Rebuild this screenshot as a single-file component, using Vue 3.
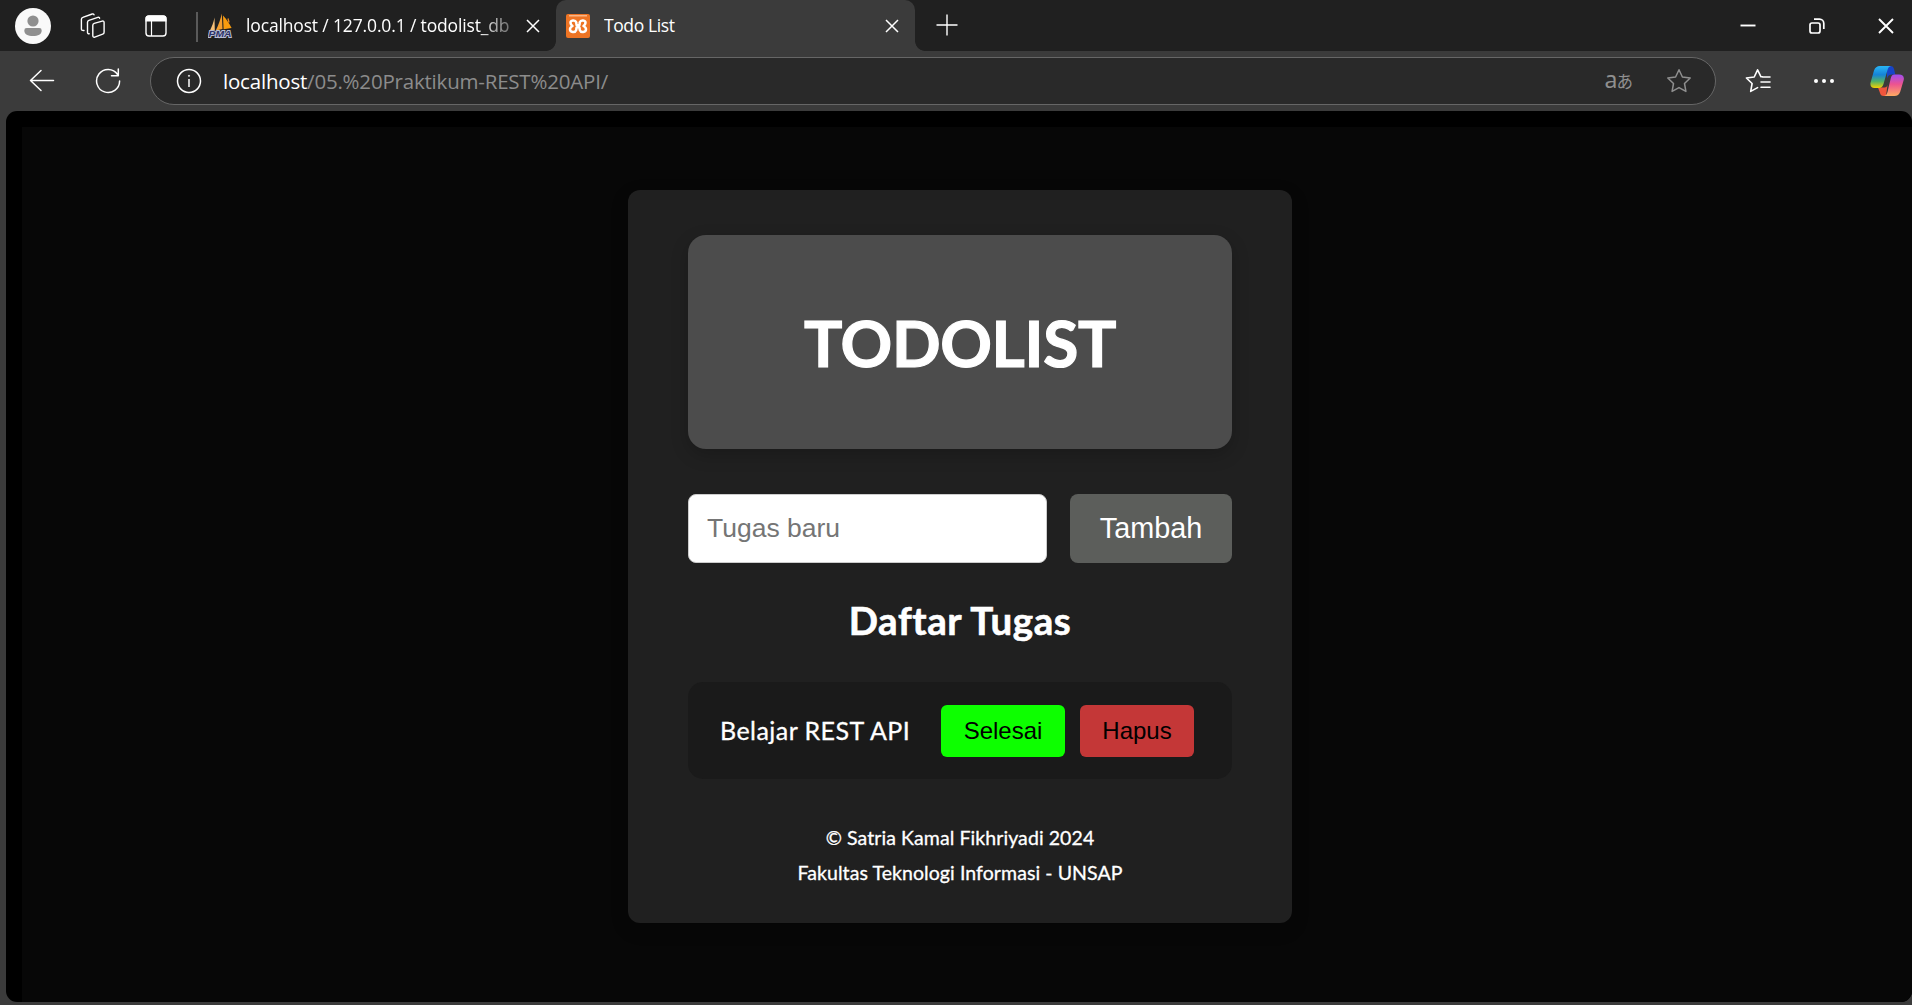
<script setup>
import { ref } from 'vue'

const newTask = ref('')
const tasks = ref([{ id: 1, name: 'Belajar REST API' }])

function addTask() {
  const name = newTask.value.trim()
  if (!name) return
  tasks.value.push({ id: Date.now(), name })
  newTask.value = ''
}
function removeTask(id) {
  tasks.value = tasks.value.filter((t) => t.id !== id)
}
</script>

<template>
  <div class="window">
    <header class="titlebar">
      <svg class="avatar" width="36" height="36" viewBox="0 0 36 36">
        <circle cx="18" cy="18" r="18" fill="#f9f9f9" />
        <circle cx="18" cy="13" r="5.6" fill="#8f8f8f" />
        <path d="M11.700 20h12.600a2.400 2.400 0 0 1 2.400 2.400c0 3.600-3.600 5.700-8.700 5.700s-8.700-2.100-8.700-5.700a2.400 2.400 0 0 1 2.400-2.400z" fill="#8f8f8f" />
      </svg>
      <svg class="workspaces" width="26" height="26" viewBox="0 0 26 26" fill="none" stroke="#fff" stroke-width="1.4" stroke-linejoin="round" stroke-linecap="round">
        <path d="M12.800 12.200c0-1 .5-1.600 1.400-1.900l8-2.200c1.200-.3 1.900.3 1.900 1.400v9.700c0 1-.5 1.700-1.400 2l-7.900 2.900c-1.200.4-2-.2-2-1.400z" />
        <path d="M9.200 20.800c-1.100.1-1.700-.5-1.700-1.500V9.200c0-1 .5-1.600 1.400-1.900L17.800 4.400c.9-.3 1.600 0 1.800.8" />
        <path d="M4 17.500c-1.600.2-2.600-.4-2.600-1.600V6.300c0-1 .5-1.600 1.400-1.900L12.200 1c.9-.3 1.500 0 1.800.8" />
      </svg>
      <svg class="vtabs" width="22" height="22" viewBox="0 0 22 22">
        <rect x="1" y="1" width="20" height="20" rx="3" fill="none" stroke="#fff" stroke-width="1.4" />
        <path d="M.5 6.500v-3a3 3 0 0 1 3-3h15a3 3 0 0 1 3 3v3z" fill="#fff" />
        <path d="M6.500 6v15" stroke="#fff" stroke-width="1.200" />
      </svg>
      <i class="divider"></i>
      <div class="tab first">
        <svg width="26" height="26" viewBox="0 0 26 26">
          <path d="M6.500 4.500 6.800 17 1.500 18.500C3.800 14 5.500 9.500 6.500 4.500z" fill="#f6c078" />
          <path d="M13.800.5 14.500 16 7.800 17.500C10.500 12 12.600 6 13.800.5z" fill="#f5a030" />
          <path d="M15 2.500c3.300 3.500 6.500 8 8.600 12.500l-8 1.200z" fill="#f89c0e" />
          <path d="M20 5.500l1 4" stroke="#e98c22" stroke-width="1.300" />
          <text x="0.500" y="24" textLength="23" lengthAdjust="spacingAndGlyphs" font-family="Liberation Sans, sans-serif" font-size="9.500" font-weight="700" font-style="italic" fill="#2c3268" stroke="#b9bcd4" stroke-width="1.800" paint-order="stroke">PMA</text>
        </svg>
        <span class="tab-title faded">localhost / 127.0.0.1 / todolist_db</span>
        <svg class="x" width="14" height="14" viewBox="0 0 14 14"><path d="M1 1l12 12M13 1 1 13" stroke="#fff" stroke-width="1.500" /></svg>
      </div>
      <div class="tab active">
        <svg width="24" height="24" viewBox="0 0 24 24">
          <rect width="24" height="24" rx="2" fill="#ee7424" />
          <path d="M3 1.800h18" stroke="#fbc6a0" stroke-width="1.200" />
          <path d="M4.500 8.800C4.300 6.100 9.200 5.500 10.200 8.200c.4 1.200-.2 2.900.6 3h2.400c.8-.1.200-1.800.6-3 1-2.700 5.900-2.100 5.700.6-.1 1.600-1 2.500-2 3.200 1.400.7 2.500 1.700 2.500 3.300 0 3.300-5.200 3.700-6.200.9-.4-1.200.2-2.900-.6-3h-2.400c-.8.1-.2 1.800-.6 3-1 2.800-6.200 2.400-6.200-.9 0-1.600 1.100-2.600 2.500-3.300-1-.7-1.900-1.600-2-3.200z" fill="none" stroke="#fff" stroke-width="2.500" stroke-linejoin="round" />
        </svg>
        <span class="tab-title">Todo List</span>
        <svg class="x" width="14" height="14" viewBox="0 0 14 14"><path d="M1 1l12 12M13 1 1 13" stroke="#fff" stroke-width="1.500" /></svg>
      </div>
      <svg class="plus" width="22" height="22" viewBox="0 0 22 22"><path d="M11 .5v21M.5 11h21" stroke="#fff" stroke-width="1.400" /></svg>
      <div class="controls">
        <svg width="16" height="16" viewBox="0 0 16 16"><path d="M.5 7.500h15" stroke="#fff" stroke-width="1.900" /></svg>
        <svg width="16" height="16" viewBox="0 0 16 16" fill="none" stroke="#fff" stroke-width="1.700"><rect x="1" y="5" width="10" height="10" rx="2" /><path d="M5 1.200h5.500a4.300 4.300 0 0 1 4.300 4.300V11" /></svg>
        <svg width="16" height="16" viewBox="0 0 16 16"><path d="M1 1l14 14M15 1 1 15" stroke="#fff" stroke-width="1.900" /></svg>
      </div>
    </header>

    <nav class="toolbar">
      <svg class="back" width="26" height="24" viewBox="0 0 26 24" fill="none" stroke="#fff" stroke-width="1.500" stroke-linecap="round" stroke-linejoin="round"><path d="M24.500 11.500h-23M12 1.500l-10.500 10L12 21.500" /></svg>
      <svg class="reload" width="26" height="26" viewBox="0 0 26 26" fill="none" stroke="#fff" stroke-width="1.500" stroke-linecap="round" stroke-linejoin="round"><path d="M24.600 13A11.500 11.500 0 1 1 22.600 6.500M23.300 1v6.800h-6.800" /></svg>
      <div class="address">
        <svg width="26" height="26" viewBox="0 0 26 26" fill="none" stroke="#fff" stroke-width="1.500"><circle cx="13" cy="13" r="11.500" /><path d="M13 11v8" /><circle cx="13" cy="7.800" r=".6" fill="#fff" stroke-width=".8" /></svg>
        <span class="url"><b>localhost</b><span>/05.%20Praktikum-REST%20API/</span></span>
        <span class="translate">a<small>あ</small></span>
        <svg class="star" width="26" height="26" viewBox="0 0 26 26" fill="none" stroke="#8f8f8f" stroke-width="1.500" stroke-linejoin="round"><path d="M13 1.800 16.400 9l7.800 1-5.700 5.500 1.400 7.900L13 19.600l-6.900 3.800 1.400-7.900L1.800 10l7.800-1z" /></svg>
      </div>
      <svg class="favs" width="26" height="26" viewBox="0 0 26 26" fill="none" stroke="#fff" stroke-width="1.600" stroke-linejoin="round" stroke-linecap="round"><path d="M17.500 8.800H16L12.600 1.800 9.200 9l-7.800 1 5.700 5.500-1.400 7.900 6.900-3.800M17.500 9H25M16 14h9M16 19.300h9" /></svg>
      <svg class="dots" width="22" height="6" viewBox="0 0 22 6" fill="#fff"><circle cx="3" cy="3" r="2" /><circle cx="11" cy="3" r="2" /><circle cx="19" cy="3" r="2" /></svg>
      <svg class="copilot" width="34" height="32" viewBox="0 0 34 32">
        <defs>
          <linearGradient id="cpA" x1="0" y1="0" x2="0" y2="1"><stop offset="0" stop-color="#29b6f6" /><stop offset=".4" stop-color="#1583d8" /><stop offset=".7" stop-color="#52b167" /><stop offset="1" stop-color="#f5d000" /></linearGradient>
          <linearGradient id="cpB" x1="0" y1="0" x2="0" y2="1"><stop offset="0" stop-color="#a04df0" /><stop offset=".45" stop-color="#ed5390" /><stop offset="1" stop-color="#ffab62" /></linearGradient>
        </defs>
        <path d="M17 1h3.500c2 0 3 1 3.500 3l1.300 5.500h-3c-3 0-4.500 1.500-5.300 4z" fill="#1744c8" />
        <path d="M8 22.500h6.500c1.500 0 2.500-.8 3-2.500L16 31h-2.500c-2 0-3-1-3.500-3z" fill="#f0553c" />
        <path d="M10 1h11c-2 .3-2.800 1.800-3.500 4l-4 14c-.8 2.700-2.200 4-4.500 4H4.500C1.500 23-.2 20.800.6 17.500L4 5.500C5 2.500 7 1 10 1z" fill="url(#cpA)" />
        <path d="M24.500 9.500h4.500c3.500 0 5.500 2 4.700 5.500L30.300 26.500c-1 3-3 4.500-6 4.500H14c2-.3 2.800-1.800 3.500-4l3.200-13.500c.7-2.700 1.500-4 3.800-4z" fill="url(#cpB)" />
      </svg>
    </nav>

    <div class="viewport">
      <div class="page">
        <main class="card">
          <div class="banner"><h1>TODOLIST</h1></div>
          <form class="entry" @submit.prevent="addTask">
            <input v-model="newTask" type="text" placeholder="Tugas baru" />
            <button type="submit">Tambah</button>
          </form>
          <h2>Daftar Tugas</h2>
          <ul>
            <li v-for="task in tasks" :key="task.id">
              <span class="name">{{ task.name }}</span>
              <button class="done">Selesai</button>
              <button class="delete" @click="removeTask(task.id)">Hapus</button>
            </li>
          </ul>
          <footer>
            <p>© Satria Kamal Fikhriyadi 2024</p>
            <p>Fakultas Teknologi Informasi - UNSAP</p>
          </footer>
        </main>
      </div>
    </div>
  </div>
</template>

<style>
html,
body {
  margin: 0;
  overflow: hidden;
  background: #3b3b3b;
}
</style>

<style scoped>
* {
  box-sizing: border-box;
}
svg {
  display: block;
  flex: none;
}
.window {
  width: 1912px;
  height: 1005px;
  display: flex;
  flex-direction: column;
  background: #3b3b3b;
  color: #fff;
  font-family: "Open Sans", "Noto Sans", sans-serif;
}
.titlebar {
  height: 51px;
  flex: none;
  display: flex;
  align-items: center;
  padding-left: 15px;
  background: #202020;
}
.workspaces {
  margin-left: 29px;
}
.vtabs {
  margin-left: 39px;
}
.divider {
  width: 2px;
  height: 30px;
  margin: 2px 0 0 29px;
  background: #5a5a5a;
}
.tab {
  height: 51px;
  display: flex;
  align-items: center;
  font-size: 17.500px;
}
.tab.first {
  width: 358px;
  padding-left: 10px;
}
.tab.first > svg:first-child {
  margin-top: 1px;
}
.tab-title {
  flex: 1;
  white-space: nowrap;
  overflow: hidden;
  line-height: 26px;
  padding-bottom: 1px;
  letter-spacing: -0.4px;
}
.tab.first .tab-title {
  margin-left: 12px;
  letter-spacing: -0.150px;
}
.faded {
  mask-image: linear-gradient(90deg, #000 232px, rgba(0, 0, 0, 0.3) 266px);
}
.x {
  margin-top: 1px;
}
.tab.first .x {
  margin-right: 16px;
}
.tab.active {
  position: relative;
  width: 359px;
  padding: 0 16px 0 10px;
  border-radius: 10px 10px 0 0;
  background: #3b3b3b;
}
.tab.active::before,
.tab.active::after {
  content: "";
  position: absolute;
  bottom: 0;
  width: 10px;
  height: 10px;
}
.tab.active::before {
  left: -10px;
  background: radial-gradient(circle at 0 0, transparent 9.500px, #3b3b3b 10.200px);
}
.tab.active::after {
  right: -10px;
  background: radial-gradient(circle at 100% 0, transparent 9.500px, #3b3b3b 10.200px);
}
.tab.active .tab-title {
  margin-left: 14px;
}
.plus {
  margin-left: 21px;
  margin-top: -2px;
}
.controls {
  margin-left: auto;
  display: flex;
  gap: 53px;
  padding-right: 18.500px;
}
.toolbar {
  height: 60px;
  flex: none;
  display: flex;
  align-items: center;
  padding-left: 29px;
}
.reload {
  margin-left: 40px;
}
.address {
  width: 1566px;
  height: 48px;
  margin: 0 0 1px 29px;
  display: flex;
  align-items: center;
  padding: 0 23px 0 25px;
  border: 1.500px solid #666;
  border-radius: 24px;
  background: #292929;
}
.url {
  flex: 1;
  margin-left: 21px;
  font-size: 20.500px;
  line-height: 28px;
  white-space: nowrap;
  color: #8c8c8c;
  letter-spacing: -0.200px;
}
.url b {
  font-weight: 400;
  color: #fff;
}
.translate {
  display: flex;
  align-items: baseline;
  font: 23px/24px "Noto Sans", "Noto Sans CJK JP", sans-serif;
  color: #8f8f8f;
  margin: 0 33px 1px 0;
  white-space: nowrap;
}
.translate small {
  margin-left: -1px;
  font-size: 16.500px;
  line-height: 24px;
}
.favs {
  margin-left: 29px;
}
.dots {
  margin-left: 42px;
}
.copilot {
  margin-left: 35px;
}
.viewport {
  width: 1906px;
  height: 891px;
  margin-left: 6px;
  padding: 16px 0 0 16px;
  border-radius: 11px;
  background: #000;
  overflow: hidden;
}
.page {
  height: 875px;
  padding: 63px 0 0 606px;
  background: #070707;
}
.card {
  width: 664px;
  height: 733px;
  padding: 45px 60px 0;
  border-radius: 12px;
  background: #202020;
  box-shadow: 0 6px 18px rgba(0, 0, 0, 0.2);
  font-family: Lato, sans-serif;
}
.banner {
  height: 214px;
  display: flex;
  align-items: center;
  justify-content: center;
  border-radius: 18px;
  background: #4c4c4c;
  box-shadow: 0 6px 18px rgba(0, 0, 0, 0.2);
}
h1 {
  margin: 2px 0 0;
  font-size: 64px;
  line-height: 78px;
  font-weight: 700;
  letter-spacing: -0.350px;
  -webkit-text-stroke: 1.200px #fff;
}
.entry {
  display: flex;
  gap: 23px;
  margin-top: 45px;
}
.entry input {
  width: 359px;
  height: 69px;
  padding: 0 18px;
  border: 1px solid #ccc;
  border-radius: 8px;
  background: #fff;
  font: 26.500px "Liberation Sans", Arial, sans-serif;
  outline: none;
}
.entry input::placeholder {
  color: #757575;
}
.entry button {
  width: 162px;
  height: 69px;
  padding: 0 0 1px;
  border: 0;
  border-radius: 8px;
  background: #5c5e5b;
  color: #fff;
  font: 28.800px "Liberation Sans", Arial, sans-serif;
}
h2 {
  margin: 33px 0 0;
  text-align: center;
  font-size: 38.500px;
  line-height: 48px;
  font-weight: 700;
  letter-spacing: 0.600px;
  -webkit-text-stroke: 0.600px #fff;
}
ul {
  margin: 38px 0 0;
  padding: 0;
  list-style: none;
}
li {
  height: 97px;
  display: flex;
  align-items: center;
  padding: 0 38px 0 32px;
  border-radius: 15px;
  background: #1a1a1a;
}
.name {
  flex: 1;
  font-size: 25px;
  white-space: nowrap;
  padding-bottom: 2px;
  letter-spacing: 0.450px;
  -webkit-text-stroke: 0.300px #fff;
}
li button {
  height: 52px;
  padding: 0;
  border: 0;
  border-radius: 6px;
  color: #000;
  font: 24px "Liberation Sans", Arial, sans-serif;
}
.done {
  width: 124px;
  background: #0dff00;
}
.delete {
  width: 114px;
  margin-left: 15px;
  background: #c43737;
}
footer {
  margin-top: 41px;
  text-align: center;
  font-size: 19.500px;
  line-height: 35px;
  letter-spacing: 0.080px;
  -webkit-text-stroke: 0.300px #fff;
}
footer p {
  margin: 0;
}
</style>
